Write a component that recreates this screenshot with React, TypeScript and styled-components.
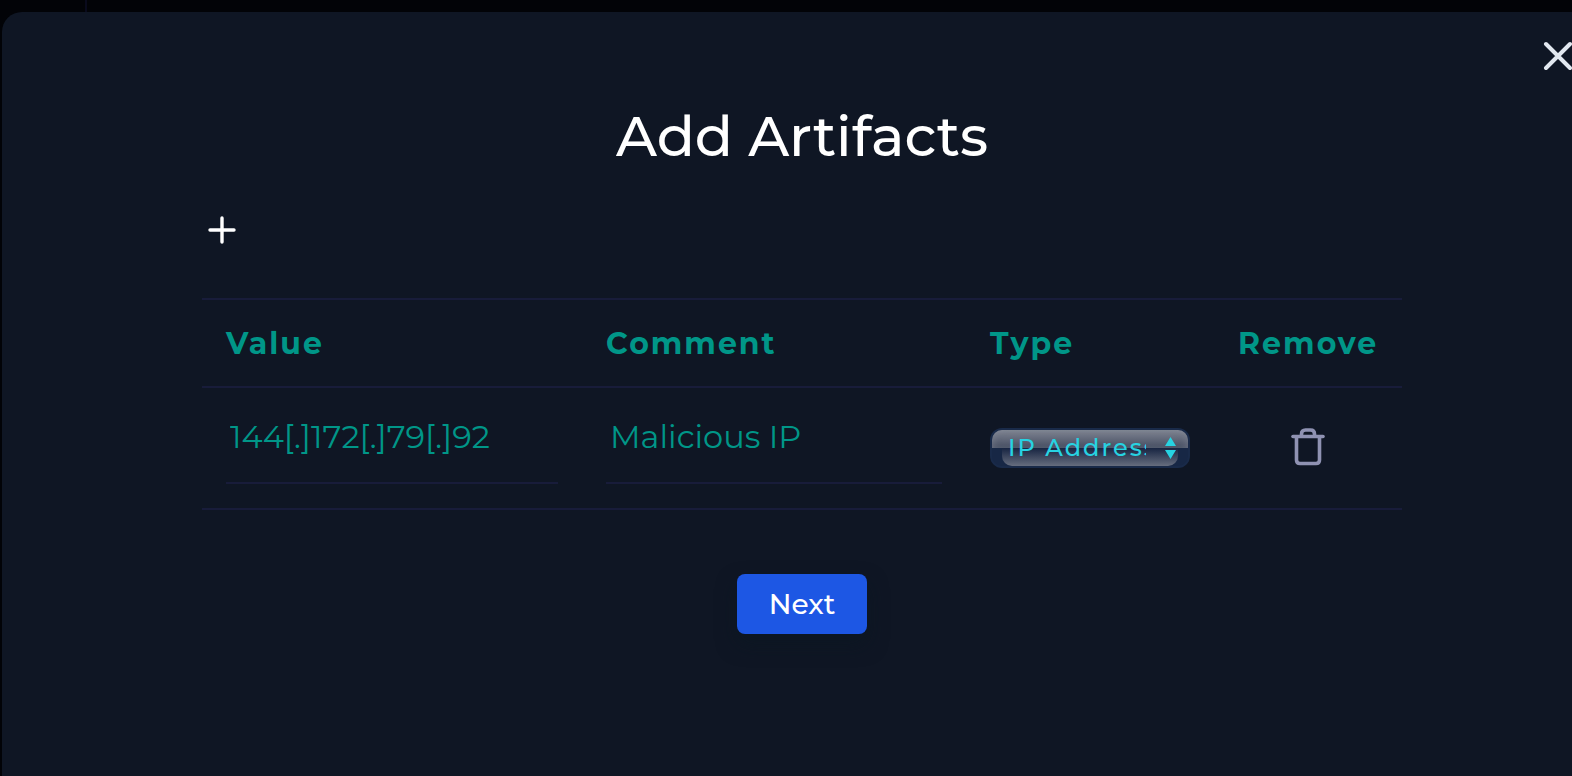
import React, { useState } from "react";
import styled, { createGlobalStyle } from "styled-components";

const GlobalStyle = createGlobalStyle`
  *, *::before, *::after { box-sizing: border-box; }
  body {
    margin: 0;
    background: #020307;
    color: #ffffff;
    font-family: Montserrat, Inter, "Liberation Sans", sans-serif;
    overflow: hidden;
  }
  button, input, select { font-family: inherit; }
`;

const Page = styled.div`
  min-height: 100vh;
  display: flex;
  flex-direction: column;
  overflow: hidden;
`;

const Backdrop = styled.div`
  height: 12px;
  padding-left: 85px;
`;

const SidebarEdge = styled.div`
  width: 2px;
  height: 100%;
  background: #090a1c;
`;

const Modal = styled.main`
  flex: 1;
  margin: 0 -30px 0 2px;
  padding: 24px 24px 0;
  background: #0f1624;
  border-radius: 20px 20px 0 0;
  display: flex;
  flex-direction: column;
`;

const IconButton = styled.button`
  display: grid;
  place-items: center;
  width: 40px;
  height: 40px;
  padding: 0;
  border: 0;
  background: none;
  color: ${(p) => p.color};
  cursor: pointer;
`;

const CloseRow = styled.div`
  display: flex;
  justify-content: flex-end;
`;

const Content = styled.form`
  margin: 0 176px;
  display: flex;
  flex-direction: column;
`;

const Title = styled.h1`
  margin: 24px 0 0;
  font-size: 56px;
  line-height: 72px;
  font-weight: 500;
  text-align: center;
`;

const Toolbar = styled.div`
  display: flex;
  padding: 38px 0 48px;
`;

const Table = styled.table`
  width: 100%;
  table-layout: fixed;
  border-spacing: 0;
  border-top: 2px solid #181c3a;
`;

const Column = styled.col<{ $share: number }>`
  width: ${(p) => p.$share}%;
`;

const HeaderCell = styled.th`
  height: 88px;
  padding: 2px 24px 0;
  border-bottom: 2px solid #181c3a;
  color: #009688;
  font-size: 30px;
  line-height: 40px;
  font-weight: 700;
  letter-spacing: 2px;
  text-align: left;
`;

const Cell = styled.td`
  height: 122px;
  padding: 0 24px;
  border-bottom: 2px solid #181c3a;
  vertical-align: middle;
`;

const TextInput = styled.input`
  display: block;
  width: 100%;
  height: 72px;
  padding: 0 4px 22px;
  border: 0;
  border-bottom: 2px solid #181c3a;
  background: none;
  color: #009688;
  font-size: 32px;
  outline: 0;
`;

const SelectFrame = styled.div`
  position: relative;
  height: 40px;
  border: 2px solid #192a49;
  border-radius: 12px;
  background: #172745;

  &::before, &::after {
    content: "";
    position: absolute;
    height: 18px;
  }
  &::before {
    inset: 0 0 auto;
    border-radius: 10px 10px 0 0;
    background: linear-gradient(#7f8492, #454d61);
    box-shadow: inset 4px 0 6px -2px #8d919d66, inset -4px 0 6px -2px #8d919d66;
  }
  &::after {
    inset: auto 10px 0;
    border-radius: 0 0 10px 10px;
    background: linear-gradient(#172441, #666d7e);
  }
`;

const Select = styled.select`
  position: relative;
  z-index: 1;
  display: block;
  width: 154px;
  height: 36px;
  padding: 0 0 2px 16px;
  border: 0;
  appearance: none;
  background: none;
  color: #27d3e2;
  font-size: 24px;
  font-weight: 500;
  letter-spacing: 2px;
  text-overflow: clip;
  outline: 0;
`;

const Arrows = styled.svg`
  position: absolute;
  z-index: 1;
  top: 7px;
  right: 12px;
  pointer-events: none;
`;

const RemoveSlot = styled.div`
  display: flex;
  justify-content: center;
  padding-bottom: 2px;
`;

const NextButton = styled.button`
  align-self: center;
  width: 130px;
  height: 60px;
  margin-top: 64px;
  padding: 0;
  border: 0;
  border-radius: 8px;
  background: #1d57e4;
  box-shadow: 0 10px 20px #0a172299;
  color: #ffffff;
  font-size: 28px;
  font-weight: 500;
  cursor: pointer;
`;

type Artifact = { id: number; value: string; comment: string; type: string };

export default function App() {
  const [rows, setRows] = useState<Artifact[]>([
    { id: 1, value: "144[.]172[.]79[.]92", comment: "Malicious IP", type: "IP Address" },
  ]);
  const update = (id: number, patch: Partial<Artifact>) =>
    setRows((all) => all.map((r) => (r.id === id ? { ...r, ...patch } : r)));
  const add = () =>
    setRows((all) => [...all, { id: Date.now(), value: "", comment: "", type: "IP Address" }]);

  return (
    <>
      <GlobalStyle />
      <Page>
        <Backdrop>
          <SidebarEdge />
        </Backdrop>
        <Modal>
          <CloseRow>
            <IconButton type="button" color="#e2e8f0" aria-label="Close">
              <svg width="32" height="32" viewBox="0 0 32 32" fill="none" stroke="currentColor" strokeWidth="4" strokeLinecap="round">
                <path d="M4 4 28 28M28 4 4 28" />
              </svg>
            </IconButton>
          </CloseRow>
          <Content onSubmit={(e) => e.preventDefault()}>
            <Title>Add Artifacts</Title>
            <Toolbar>
              <IconButton type="button" color="#ffffff" aria-label="Add artifact" onClick={add}>
                <svg width="28" height="28" viewBox="0 0 28 28" fill="none" stroke="currentColor" strokeWidth="3.4" strokeLinecap="round">
                  <path d="M14 2v24M2 14h24" />
                </svg>
              </IconButton>
            </Toolbar>
            <Table>
              <colgroup>
                <Column $share={31.67} />
                <Column $share={32} />
                <Column $share={20.67} />
                <Column $share={15.66} />
              </colgroup>
              <thead>
                <tr>
                  <HeaderCell scope="col">Value</HeaderCell>
                  <HeaderCell scope="col">Comment</HeaderCell>
                  <HeaderCell scope="col">Type</HeaderCell>
                  <HeaderCell scope="col">Remove</HeaderCell>
                </tr>
              </thead>
              <tbody>
                {rows.map((row) => (
                  <tr key={row.id}>
                    <Cell>
                      <TextInput aria-label="Value" value={row.value} onChange={(e) => update(row.id, { value: e.target.value })} />
                    </Cell>
                    <Cell>
                      <TextInput aria-label="Comment" value={row.comment} onChange={(e) => update(row.id, { comment: e.target.value })} />
                    </Cell>
                    <Cell>
                      <SelectFrame>
                        <Select aria-label="Type" value={row.type} onChange={(e) => update(row.id, { type: e.target.value })}>
                          <option>IP Address</option>
                        </Select>
                        <Arrows width="11" height="22" viewBox="0 0 11 22" fill="#27d3e2" aria-hidden="true">
                          <path d="M5.500 0 11 9H0zM0 13h11l-5.500 9z" />
                        </Arrows>
                      </SelectFrame>
                    </Cell>
                    <Cell>
                      <RemoveSlot>
                        <IconButton type="button" color="#8f92b2" aria-label="Remove artifact" onClick={() => setRows((all) => all.filter((r) => r.id !== row.id))}>
                          <svg width="34" height="40" viewBox="0 0 34 40" fill="none" stroke="currentColor" strokeWidth="3.6" strokeLinejoin="round">
                            <path d="M2 9.500h30" strokeLinecap="round" />
                            <path d="M10.500 9V7q0-4 4-4h5q4 0 4 4v2" />
                            <path d="M5.500 10v23q0 3.500 3.500 3.500h16q3.500 0 3.500-3.500V10" />
                          </svg>
                        </IconButton>
                      </RemoveSlot>
                    </Cell>
                  </tr>
                ))}
              </tbody>
            </Table>
            <NextButton type="submit">Next</NextButton>
          </Content>
        </Modal>
      </Page>
    </>
  );
}
